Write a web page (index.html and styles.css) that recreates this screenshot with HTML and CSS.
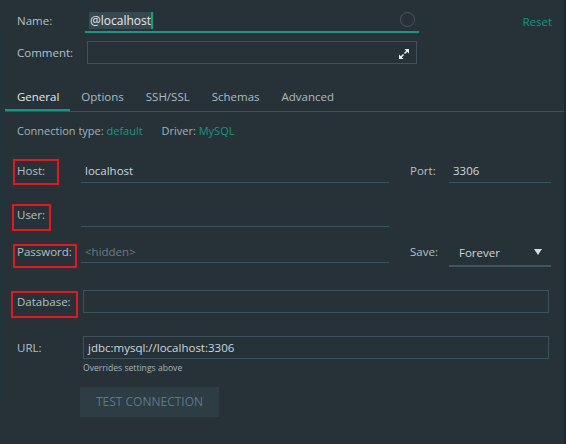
FILE: index.html
```html
<!DOCTYPE html>
<html>
<head>
<meta charset="utf-8">
<link rel="stylesheet" href="styles.css">
</head>
<body>
<div class="window">
  <div class="edge-left"></div>
  <div class="main">
    <div class="row name-row">
      <span class="lbl w68">Name:</span>
      <div class="name-input">
        <span class="sel">@localhost</span><span class="caret"></span>
        <span class="spinner"></span>
      </div>
      <span class="reset">Reset</span>
    </div>

    <div class="row comment-row">
      <span class="lbl w70">Comment:</span>
      <div class="box comment-box">
        <svg class="expand" width="12" height="12" viewBox="0 0 12 12">
          <line x1="6.5" y1="5.5" x2="10" y2="2" stroke="#e8eef0" stroke-width="1.6"/>
          <polygon points="6.5,1 11,1 11,5.5" fill="#e8eef0"/>
          <line x1="2" y1="10" x2="5.5" y2="6.5" stroke="#e8eef0" stroke-width="1.6"/>
          <polygon points="1,6.5 1,11 5.5,11" fill="#e8eef0"/>
        </svg>
      </div>
    </div>

    <div class="tabs">
      <span class="tab active">General</span>
      <span class="tab">Options</span>
      <span class="tab">SSH/SSL</span>
      <span class="tab">Schemas</span>
      <span class="tab">Advanced</span>
    </div>

    <div class="conn">
      <span>Connection type:</span> <span class="teal">default</span>
      <span class="drv">Driver:</span> <span class="teal">MySQL</span>
    </div>

    <div class="row host-row">
      <span class="lbl w64 mark mark-host">Host:</span>
      <div class="uline w308">localhost</div>
      <span class="lbl port-lbl">Port:</span>
      <div class="uline w102">3306</div>
    </div>

    <div class="row user-row">
      <span class="lbl w64 mark mark-user">User:</span>
      <div class="uline w308"></div>
    </div>

    <div class="row pass-row">
      <span class="lbl w64 mark mark-pass">Password:</span>
      <div class="uline w308 placeholder">&lt;hidden&gt;</div>
      <span class="lbl port-lbl">Save:</span>
      <div class="select">
        <span>Forever</span>
        <span class="arrow"></span>
      </div>
    </div>

    <div class="row db-row">
      <span class="lbl w66 mark mark-db">Database:</span>
      <div class="box wide"></div>
    </div>

    <div class="row url-row">
      <span class="lbl w66">URL:</span>
      <div class="box wide">jdbc:mysql://localhost:3306</div>
    </div>

    <div class="hint">Overrides settings above</div>

    <div class="btn">TEST CONNECTION</div>
  </div>
  <div class="edge-right"></div>
</div>
</body>
</html>
```

FILE: styles.css
```css
html, body {
  margin: 0;
  padding: 0;
  background: #263238;
}
body {
  font-family: "Open Sans", "Liberation Sans", sans-serif;
  font-size: 11.5px;
  color: #b2c0c6;
}
.window {
  display: flex;
  width: 566px;
  height: 444px;
  overflow: hidden;
  background: #263238;
}
.edge-left {
  flex: none;
  width: 3px;
  margin-top: 32px;
  height: 368px;
  background: #21343a;
}
.main {
  flex: none;
  width: 559px;
  margin-left: 2px;
}
.edge-right {
  flex: none;
  width: 2px;
  margin-left: auto;
  background: #1f282d;
}
.row {
  display: flex;
  align-items: center;
  padding-left: 12px;
}
.lbl {
  flex: none;
  position: relative;
  line-height: 16px;
  color: #b2c0c6;
}
.w64 { width: 64px; }
.w66 { width: 66px; }
.w68 { width: 68px; }
.w70 { width: 70px; }

.name-row {
  margin-top: 9px;
  height: 24px;
  padding-right: 12px;
}
.name-input {
  position: relative;
  width: 334px;
  height: 24px;
  box-sizing: border-box;
  border-bottom: 2px solid #0f9a86;
  display: flex;
  align-items: center;
}
.sel {
  margin-left: 4px;
  height: 17px;
  line-height: 17px;
  padding: 0 0 0 1px;
  background: #37494f;
  color: #e4eaec;
  font-size: 12px;
}
.caret {
  width: 2px;
  height: 17px;
  background: #10a08a;
}
.spinner {
  position: absolute;
  right: 4px;
  top: 3px;
  width: 15px;
  height: 15px;
  box-sizing: border-box;
  border: 1.5px solid #4a585e;
  border-radius: 50%;
}
.reset {
  margin-left: auto;
  color: #13977f;
}

.comment-row {
  margin-top: 8px;
  height: 23px;
}
.box {
  position: relative;
  height: 23px;
  box-sizing: border-box;
  border: 1px solid #3e525b;
  display: flex;
  align-items: center;
  padding-left: 4px;
  color: #ccd7db;
}
.comment-box { width: 330px; }
.expand {
  position: absolute;
  right: 6px;
  top: 6px;
}

.tabs {
  display: flex;
  margin-top: 20px;
  height: 27px;
  border-bottom: 1px solid #3a5361;
  font-size: 11.5px;
}
.tab {
  padding: 0 11px;
  line-height: 25px;
  border-bottom: 2px solid transparent;
  color: #acbac1;
}
.tab.active {
  padding-left: 12px;
  color: #e2e8ea;
  border-bottom-color: #0f9a86;
}

.conn {
  margin-top: 12px;
  padding-left: 12px;
  height: 14px;
  line-height: 14px;
  font-size: 11px;
  color: #a4b2b9;
}
.conn .drv { margin-left: 16px; }
.teal { color: #17977f; }

.uline {
  height: 25px;
  box-sizing: border-box;
  border-bottom: 1px solid #3d535d;
  display: flex;
  align-items: center;
  padding-left: 4px;
  color: #ccd7db;
}
.w308 { width: 308px; }
.w102 { width: 102px; }
.port-lbl {
  margin-left: 21px;
  width: 39px;
}

.host-row {
  margin-top: 20px;
  height: 25px;
}
.user-row {
  margin-top: 19px;
  height: 25px;
}
.pass-row {
  margin-top: 13px;
  height: 28px;
  align-items: flex-start;
}
.pass-row .lbl {
  line-height: 23px;
}
.pass-row .uline {
  height: 23px;
}
.placeholder {
  color: #6b7c84;
}
.select {
  width: 102px;
  height: 27px;
  box-sizing: border-box;
  border-bottom: 2px solid #3f5661;
  display: flex;
  align-items: center;
  padding-left: 10px;
  padding-bottom: 1px;
  color: #ccd7db;
}
.arrow {
  margin-left: auto;
  margin-right: 9px;
  width: 0;
  height: 0;
  border-left: 4px solid transparent;
  border-right: 4px solid transparent;
  border-top: 6px solid #d4dcdf;
}

.db-row {
  margin-top: 22px;
  height: 23px;
}
.url-row {
  margin-top: 23px;
  height: 23px;
}
.wide { width: 466px; }

.hint {
  margin-top: 3px;
  margin-left: 78px;
  height: 12px;
  line-height: 12px;
  font-size: 8.6px;
  color: #a4b2b9;
}
.btn {
  margin-top: 13px;
  margin-left: 75px;
  width: 139px;
  height: 30px;
  line-height: 30px;
  text-align: center;
  background: #2e3c43;
  color: #587a8a;
  font-size: 12px;
}

/* red annotation boxes drawn over labels */
.mark::after {
  content: "";
  position: absolute;
  box-sizing: border-box;
  border: 2px solid #e8151d;
}
.mark-host::after { left: -4px; top: -4px; width: 46px; height: 26px; }
.mark-user::after { left: -5px; top: -3px; width: 39px; height: 27px; }
.mark-pass::after { left: -4px; top: 4px; width: 64px; height: 24px; }
.mark-db::after { left: -6px; top: -3px; width: 67px; height: 27px; }
```
